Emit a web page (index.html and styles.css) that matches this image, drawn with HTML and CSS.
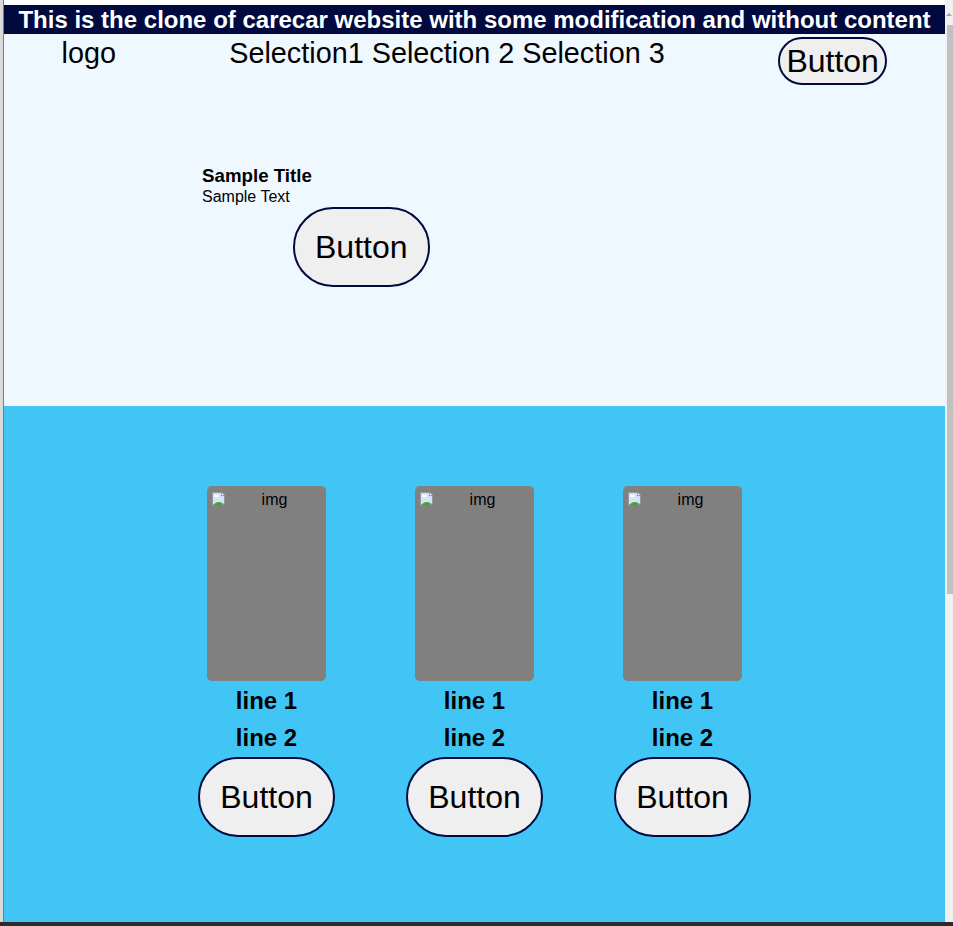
FILE: index.html
```html
<!DOCTYPE html>
<html lang="en">
<head>
<meta charset="utf-8">
<title>carecar clone</title>
<link rel="stylesheet" href="styles.css">
</head>
<body>
<div class="window">
  <div class="frame">
    <div class="chrome-left"></div>
    <div class="viewport">
      <div class="top-edge"></div>
      <div class="banner">This is the clone of carecar website with some modification and without content</div>
      <section class="hero-section">
        <nav class="nav">
          <div class="nav-item">logo</div>
          <div class="nav-item">Selection1 Selection 2 Selection 3</div>
          <button class="nav-button">Button</button>
        </nav>
        <div class="hero">
          <h3 class="hero-title">Sample Title</h3>
          <p class="hero-text">Sample Text</p>
          <button class="pill hero-button">Button</button>
        </div>
      </section>
      <section class="products">
        <div class="card">
          <div class="thumb">
            <svg class="broken" width="16" height="16" viewBox="0 0 16 16"><path d="M1.5 1.5h9l3 3v7.5l-1.5 1.5-1-1-1.5 1.5H1.5z" fill="#d3e3f3" stroke="#8e9aa8"/><path d="M10.5 1.5v3h3" fill="#f4f7fa" stroke="#8e9aa8"/><ellipse cx="5.5" cy="5" rx="2.6" ry="1.3" fill="#fff"/><path d="M2 14.5C4 11 8 10 11.5 12.2L10.5 14.5Z" fill="#4f9f33"/></svg>
            <span class="alt">img</span>
          </div>
          <div class="line line-1">line 1</div>
          <div class="line line-2">line 2</div>
          <button class="pill card-button">Button</button>
        </div>
        <div class="card">
          <div class="thumb">
            <svg class="broken" width="16" height="16" viewBox="0 0 16 16"><path d="M1.5 1.5h9l3 3v7.5l-1.5 1.5-1-1-1.5 1.5H1.5z" fill="#d3e3f3" stroke="#8e9aa8"/><path d="M10.5 1.5v3h3" fill="#f4f7fa" stroke="#8e9aa8"/><ellipse cx="5.5" cy="5" rx="2.6" ry="1.3" fill="#fff"/><path d="M2 14.5C4 11 8 10 11.5 12.2L10.5 14.5Z" fill="#4f9f33"/></svg>
            <span class="alt">img</span>
          </div>
          <div class="line line-1">line 1</div>
          <div class="line line-2">line 2</div>
          <button class="pill card-button">Button</button>
        </div>
        <div class="card">
          <div class="thumb">
            <svg class="broken" width="16" height="16" viewBox="0 0 16 16"><path d="M1.5 1.5h9l3 3v7.5l-1.5 1.5-1-1-1.5 1.5H1.5z" fill="#d3e3f3" stroke="#8e9aa8"/><path d="M10.5 1.5v3h3" fill="#f4f7fa" stroke="#8e9aa8"/><ellipse cx="5.5" cy="5" rx="2.6" ry="1.3" fill="#fff"/><path d="M2 14.5C4 11 8 10 11.5 12.2L10.5 14.5Z" fill="#4f9f33"/></svg>
            <span class="alt">img</span>
          </div>
          <div class="line line-1">line 1</div>
          <div class="line line-2">line 2</div>
          <button class="pill card-button">Button</button>
        </div>
      </section>
    </div>
    <div class="scrollbar">
      <div class="scroll-arrow"></div>
      <div class="scroll-thumb"></div>
    </div>
  </div>
  <div class="bottom-edge"></div>
</div>
</body>
</html>
```
FILE: styles.css
```css
html, body {
  margin: 0;
  padding: 0;
  height: 926px;
  overflow: hidden;
  font-family: "Liberation Sans", Arial, sans-serif;
  background: #f0f0f0;
}

.window {
  display: flex;
  flex-direction: column;
  height: 926px;
}

.frame {
  display: flex;
  flex: 1;
  min-height: 0;
}

.chrome-left {
  width: 3px;
  background: #dadada;
  border-right: 1px solid #7d7d7d;
}

.viewport {
  flex: 1;
  display: flex;
  flex-direction: column;
  min-width: 0;
  overflow: hidden;
}

.top-edge {
  height: 5px;
  background: #ffffff;
}

.banner {
  height: 29px;
  line-height: 29px;
  background: #000a3e;
  color: #ffffff;
  font-weight: bold;
  font-size: 24px;
  text-align: center;
  white-space: nowrap;
}

.hero-section {
  height: 372px;
  background: #f0f8ff;
}

.nav {
  display: flex;
  justify-content: space-around;
  align-items: flex-start;
  padding-top: 3px;
  font-size: 28.8px;
}

.nav-item {
  line-height: 33px;
}

.nav-item:first-child {
  margin-left: 1px;
}

.nav-button {
  font-family: "Liberation Sans", Arial, sans-serif;
  font-size: 32px;
  height: 48px;
  padding: 0 6.5px;
  margin-right: 1px;
  background: #efefef;
  color: #000;
  border: 2px solid #000a3e;
  border-radius: 24px;
}

.hero {
  padding: 80px 0 0 198px;
  display: flex;
  flex-direction: column;
  align-items: flex-start;
}

.hero-title {
  margin: 0;
  font-size: 18.72px;
  font-weight: bold;
}

.hero-text {
  margin: 1px 0 0 0;
  font-size: 16px;
}

.pill {
  font-family: "Liberation Sans", Arial, sans-serif;
  font-size: 32px;
  height: 80px;
  padding: 0 20px;
  background: #efefef;
  color: #000;
  border: 2px solid #000a3e;
  border-radius: 40px;
}

.hero-button {
  margin: 1px 0 0 91px;
}

.products {
  flex: 1;
  background: #40c5f4;
  padding-top: 80px;
  display: grid;
  grid-template-columns: repeat(3, 208px);
  justify-content: center;
  align-content: start;
}

.card {
  display: flex;
  flex-direction: column;
  align-items: center;
}

.thumb {
  width: 119px;
  height: 195px;
  box-sizing: border-box;
  padding: 4px 4px 0 4px;
  background: #808080;
  border-radius: 5px;
  display: flex;
  align-items: flex-start;
}

.broken {
  flex: none;
  margin-top: 1px;
}

.alt {
  flex: 1;
  text-align: center;
  font-size: 16px;
  line-height: 20px;
  color: #000;
}

.line {
  font-size: 24px;
  font-weight: bold;
  line-height: 28px;
}

.line-1 {
  margin-top: 6px;
}

.line-2 {
  margin-top: 9px;
}

.card-button {
  margin-top: 5px;
}

.scrollbar {
  width: 8px;
  background: #f1f1f1;
  display: flex;
  flex-direction: column;
  align-items: flex-end;
}

.scroll-arrow {
  width: 0;
  height: 0;
  margin: 13px 1px 0 0;
  border-left: 3px solid transparent;
  border-right: 3px solid transparent;
  border-bottom: 3px solid #a3a3a3;
}

.scroll-thumb {
  width: 6px;
  height: 569px;
  margin-top: 9px;
  background: #c1c1c1;
}

.bottom-edge {
  height: 4px;
  background: #2b2b2b;
}
```
